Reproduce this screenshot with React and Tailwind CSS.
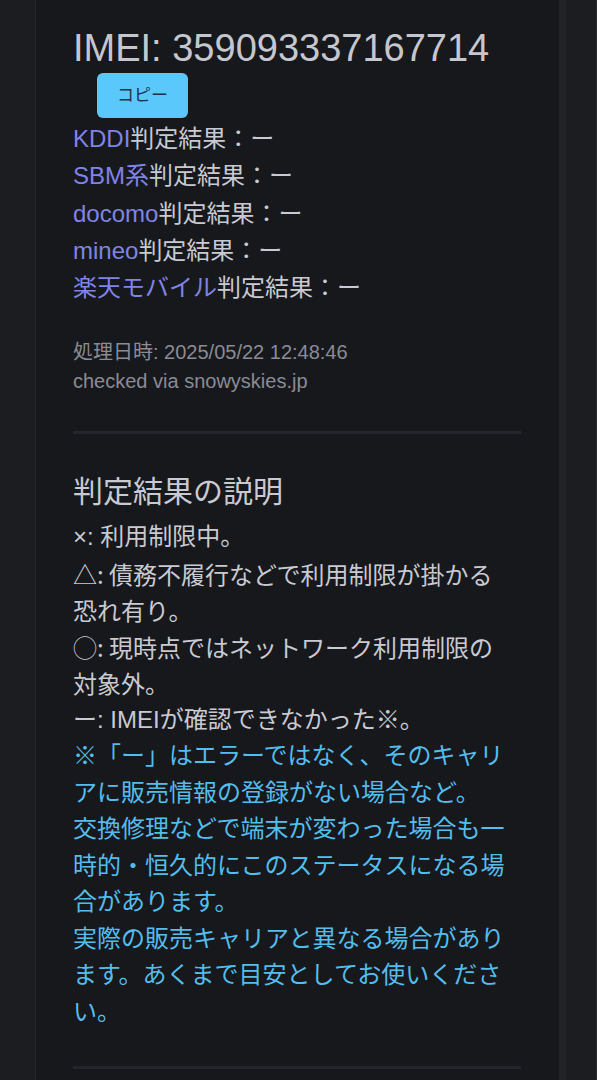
import * as React from 'react';

const carriers = [
  { name: 'KDDI' },
  { name: 'SBM系' },
  { name: 'docomo' },
  { name: 'mineo' },
  { name: '楽天モバイル' },
];

const cjk = { fontFamily: '"Noto Sans CJK JP", sans-serif' };

const App = () => {
  return (
    <div
      className="min-h-screen flex bg-[#1c1d21]"
      style={{ fontFamily: '"Liberation Sans", "Noto Sans CJK JP", sans-serif' }}
    >
      {/* left gutter */}
      <div className="w-[36px] shrink-0 border-r border-[#25262a]" />

      {/* Result card */}
      <div className="w-[523px] shrink-0 bg-[#17181c] pl-[37px] pr-[38px] pt-[26px] pb-10">
        <h1 className="text-[38px] leading-[44px] text-[#c6c7ce]">IMEI: 359093337167714</h1>
        <button className="mt-[3px] ml-6 w-[91px] h-[45px] rounded-md bg-[#5ac8fa] text-[17px] text-[#17334d]">
          コピー
        </button>

        <div className="mt-[2px] text-[24px] leading-[37.3px] text-[#c9cad1]">
          {carriers.map((c) => (
            <div key={c.name}>
              <span className="text-[#7f84e6]">{c.name}</span>判定結果：ー
            </div>
          ))}
        </div>

        <div className="mt-[32px] text-[20px] leading-[29px] text-[#8a8b95]">
          <div>処理日時: 2025/05/22 12:48:46</div>
          <div>checked via snowyskies.jp</div>
        </div>

        <hr className="mt-[35px] border-0 h-[3px] bg-[#25262c]" />

        {/* Legend */}
        <h2 className="mt-[38px] text-[30px] leading-[40px] text-[#c9cad1]">判定結果の説明</h2>
        <div className="mt-[7px] w-[440px] text-[24px] leading-[36.5px] text-[#c9cad1]">
          <div>×: 利用制限中。</div>
          <div style={cjk}>△: 債務不履行などで利用制限が掛かる恐れ有り。</div>
          <div style={cjk}>◯: 現時点ではネットワーク利用制限の対象外。</div>
          <div>ー: IMEIが確認できなかった※。</div>
          <div className="text-[#54bdec]">
            <div>※「ー」はエラーではなく、そのキャリアに販売情報の登録がない場合など。</div>
            <div>交換修理などで端末が変わった場合も一時的・恒久的にこのステータスになる場合があります。</div>
            <div>実際の販売キャリアと異なる場合があります。あくまで目安としてお使いください。</div>
          </div>
        </div>

        <hr className="mt-[36px] border-0 h-[3px] bg-[#25262c]" />
      </div>

      {/* right gutter */}
      <div className="w-[7px] shrink-0 bg-[#222327]" />
      <div className="flex-1 border-r border-[#2a2b2f]" />
    </div>
  );
};

export default App;
